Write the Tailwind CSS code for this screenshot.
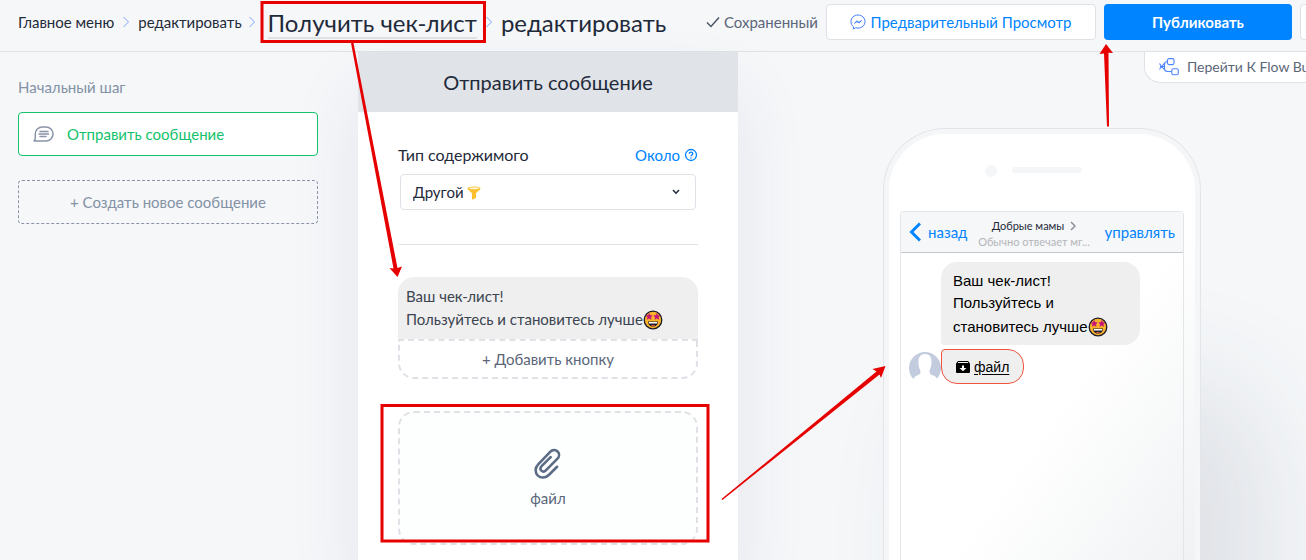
<!DOCTYPE html>
<html lang="ru">

<head>
    <meta charset="UTF-8">
    <meta name="viewport" content="width=device-width, initial-scale=1.0">
    <title>Отправить сообщение</title>
    <script src="https://cdn.jsdelivr.net/npm/@tailwindcss/browser@4"></script>
</head>

<body class="relative h-screen overflow-hidden flex flex-col bg-[#f5f7f9] font-['Lato',sans-serif] text-[15px] leading-[22px] text-[#1f2a3a]">

    <!-- shared icons -->
    <svg class="hidden">
        <symbol id="crumb" viewBox="0 0 8 12">
            <path d="M1.5 1l5 5-5 5" fill="none" stroke="#7fa6ff" stroke-width="1" />
        </symbol>
        <symbol id="star-eyes" viewBox="0 0 20 20">
            <circle cx="10" cy="10" r="8.800" fill="#fbb32b" stroke="#1c1c28" stroke-width="1.300" />
            <path d="M6.200 3.600l.9 1.900 2.100.2-1.500 1.500.4 2.100-1.900-1-1.900 1 .4-2.100-1.500-1.500 2.100-.2z" fill="#c4127c" stroke="#c4127c" stroke-width=".6" />
            <path d="M13.800 3.600l.9 1.900 2.100.2-1.500 1.500.4 2.100-1.900-1-1.900 1 .4-2.100-1.500-1.500 2.100-.2z" fill="#c4127c" stroke="#c4127c" stroke-width=".6" />
            <path d="M5 11.500h10c0 3.300-2.200 5-5 5s-5-1.700-5-5z" fill="#1c1c28" />
            <path d="M5.800 12h8.400v1.500H5.800z" fill="#fff" />
            <path d="M7.500 15.300c1.300-.8 3.700-.8 5 0-1.300.9-3.700.9-5 0z" fill="#e2574c" />
        </symbol>
    </svg>

    <header class="h-[52px] shrink-0 flex items-center pb-2 pl-[18px] border-b border-[#dfe1e5] whitespace-nowrap">
        <nav class="flex shrink-0 items-center">
            <a href="#">Главное меню</a>
            <svg class="w-2 h-3 mx-2"><use href="#crumb" /></svg>
            <a href="#">редактировать</a>
            <svg class="w-2 h-3 ml-1.5 mr-3"><use href="#crumb" /></svg>
            <h1 class="text-2xl leading-7 pt-1 border-b-2 border-[#dfe1e5]">Получить чек-лист</h1>
            <svg class="w-2 h-3 mx-2"><use href="#crumb" /></svg>
            <span class="text-2xl leading-7 pt-0.5">редактировать</span>
        </nav>
        <div class="flex shrink-0 items-center ml-auto -mr-[34px] gap-2">
            <span class="flex items-center gap-1 text-[#5b6679]">
                <svg class="w-[14px] h-3" viewBox="0 0 14 12"><path d="M1 6.500l4 4L13 1.500" fill="none" stroke="#4b5565" stroke-width="1.500" /></svg>
                Сохраненный
            </span>
            <button class="flex items-center justify-center gap-1 w-[270px] h-9 rounded border border-[#dfe1e7] bg-white text-[#0084ff]">
                <svg class="w-4 h-4" viewBox="0 0 16 16" fill="none" stroke="#3f7dff" stroke-linejoin="round">
                    <path d="M8 1C4 1 1 3.900 1 7.600c0 2.100.9 3.900 2.400 5.100V15l2.200-1.200c.8.2 1.600.3 2.400.3 4 0 7-2.900 7-6.500S12 1 8 1z" />
                    <path d="M4.500 9.200L7 6.800l2 1.600 2.500-1.900L9.200 9 7 7.600z" />
                </svg>
                Предварительный Просмотр
            </button>
            <button class="w-[188px] h-9 rounded bg-[#0084ff] text-white font-bold">Публиковать</button>
            <button class="w-10 h-9 rounded border border-[#dfe1e7] bg-white" aria-label="Ещё"></button>
        </div>
    </header>

    <div class="flex flex-1 min-h-0">
        <aside class="relative z-10 w-[358px] shrink-0 pt-6 pl-[18px] pr-10">
            <h2 class="text-[#8492a6]">Начальный шаг</h2>
            <button class="mt-3.5 w-full h-11 flex items-center gap-3 px-3.5 rounded border border-[#13c26b] bg-white text-[#13c26b]">
                <svg class="w-[22px] h-4" viewBox="0 0 22 16" fill="none" stroke="#8a93a8" stroke-width="1.500" stroke-linejoin="round">
                    <path d="M1 15c1-1 1.300-2 1.300-3.500V8a7 7 0 0 1 7-7H13a7 7 0 0 1 0 14z" />
                    <path d="M7 5.500h8M6 8h9.500M7 10.500h6" stroke-linecap="round" />
                </svg>
                Отправить сообщение
            </button>
            <button class="mt-6 w-full h-11 rounded border border-dashed border-[#8a93a8] text-[#8492a6]">+ Создать новое сообщение</button>
        </aside>

        <main class="w-[380px] shrink-0 bg-white shadow-[0_40px_70px_rgba(60,60,110,0.09)]">
            <h2 class="h-[60px] flex items-center justify-center bg-[#e0e3e8] text-xl">Отправить сообщение</h2>
            <div class="px-10 pt-8">
                <div class="flex justify-between">
                    <label for="content-type" class="text-base leading-[22px]">Тип содержимого</label>
                    <a href="#" class="flex items-center gap-1 text-[#0084ff]">
                        Около
                        <svg class="w-3.5 h-3.5" viewBox="0 0 14 14" fill="none" stroke="#0084ff" stroke-width="1.300">
                            <circle cx="7" cy="7" r="5.500" />
                            <path d="M5.300 5.800c0-2.200 3.500-2.200 3.500 0 0 1.200-1.800 1.200-1.800 2.400M7 9.200v1.200" />
                        </svg>
                    </a>
                </div>
                <div class="relative mt-2 mx-0.5">
                    <select id="content-type" class="w-full h-9 pl-3 pr-8 appearance-none rounded border border-[#dfe1e7] bg-white">
                        <option>Другой</option>
                    </select>
                    <svg class="absolute left-[67px] top-3 w-3.5 h-3.5 pointer-events-none" viewBox="0 0 14 14">
                        <path d="M.5 2.500C.5 1.200 3.500.500 7 .5s6.500.7 6.500 2c0 1.500-4 3.500-4.500 5V12l-4 1.800V7.500C4.500 6 .5 4 .5 2.500z" fill="#fdc02f" />
                        <ellipse cx="7" cy="2.300" rx="5" ry="1" fill="#fff3cf" />
                    </svg>
                    <svg class="absolute right-4 top-[15px] w-2 h-1.5 pointer-events-none" viewBox="0 0 8 6"><path d="M1 1l3 3.200L7 1" fill="none" stroke="#1f2a3a" stroke-width="1.500" /></svg>
                </div>
                <hr class="mt-[34px] border-[#dfe1e7]">

                <div class="mt-8 px-2 py-2 rounded-t-2xl bg-[#efefef] leading-[23px] text-[#3c4450]">
                    <p>Ваш чек-лист!</p>
                    <p class="flex items-center">Пользуйтесь и становитесь лучше<svg class="w-5 h-5"><use href="#star-eyes" /></svg></p>
                </div>
                <button class="w-full h-10 rounded-b-2xl border-2 border-dashed border-[#dfe1e7] text-[#5b6679]">+ Добавить кнопку</button>

                <button class="mt-8 w-full h-[134px] flex flex-col items-center justify-center gap-2 rounded-2xl border-2 border-dashed border-[#dfe1e7] bg-[#fdfffe] text-[#5b6679]">
                    <svg class="w-8 h-8" viewBox="2 1 30 30" fill="none" stroke="#5b6b86" stroke-width="2.400" stroke-linecap="round">
                        <path d="M25.500 19.500l-7.500 7.500c-3 3-7.500 3.500-10.500.8-3-3-2.700-7.500.3-10.500L19 5.500c2-2 5-2.300 7-.3s1.700 5-.3 7L15 23c-1.300 1.300-3 1.300-4.200.2-1.200-1.200-1-2.900.2-4.200l8.500-8.500" />
                    </svg>
                    файл
                </button>
            </div>
        </main>

        <section class="relative -z-10 flex-1 flex flex-col items-center pl-10">
            <a href="#" class="self-end -mr-10 w-[202px] h-[31px] shrink-0 flex items-center gap-2 pl-3.5 rounded-bl-2xl border-l border-b border-[#dfe1e7] bg-white whitespace-nowrap text-sm text-[#5b6679]">
                <svg class="w-5 h-[18px]" viewBox="0 0 20 18" fill="none" stroke="#4d86ff" stroke-width="1.100">
                    <path d="M.5 5.500l2 3-2 3M5 5.500l-2 3 2 3M1 8.500h4M8.500 3.500c-2 0-3 1-3 3v4c0 2 1 3 3 3h4" />
                    <rect x="8.500" y=".600" width="6.500" height="6" rx="1.500" />
                    <rect x="12.800" y="10.800" width="6.500" height="6" rx="1.500" />
                </svg>
                Перейти К Flow Builder
            </a>

            <div class="mt-[45px] w-[318px] flex-1 flex rounded-t-[62px] border border-b-0 border-[#e3e5e9] bg-[#f5f6f8] p-[5px] pb-0 shadow-[60px_260px_120px_rgba(60,65,90,0.12)]">
                <div class="flex-1 flex flex-col rounded-t-[56px] px-[11px] bg-linear-to-br from-white from-60% to-[#f0f2f3]">
                    <div class="h-[77px] flex items-start gap-[15px] pt-[31px] pl-[85px]">
                        <span class="w-3 h-3 rounded-full bg-[#f5f6f8]"></span>
                        <span class="w-[70px] h-1.5 mt-0.5 rounded-full bg-[#f5f6f8]"></span>
                    </div>
                    <div class="flex-1 border border-b-0 border-[#e3e5e9] rounded-t-sm">
                        <div class="h-[41px] flex items-center justify-between px-2 bg-[#f6f7f8] border-b border-[#c4c6ca] text-[#0084ff]">
                            <a href="#" class="flex items-center gap-[7px]">
                                <svg class="w-3 h-5" viewBox="0 0 12 20"><path d="M11 1.500L2.500 10l8.500 8.500" fill="none" stroke="#0084ff" stroke-width="3" /></svg>
                                назад
                            </a>
                            <div class="pt-1 pr-1 text-center text-[11px] leading-4">
                                <p class="flex items-center justify-center gap-1.5 text-[#1f2a3a]">Добрые мамы<svg class="w-1.5 h-2.5" viewBox="0 0 6 10"><path d="M1 1l4 4-4 4" fill="none" stroke="#8a8f98" stroke-width="1.500" /></svg></p>
                                <p class="text-[#b4b6ba]">Обычно отвечает мг...</p>
                            </div>
                            <a href="#">управлять</a>
                        </div>

                        <div class="pl-2 pt-[9px] font-['Liberation_Sans',sans-serif] text-black">
                            <div class="ml-8 w-[199px] pl-3 pt-2 pb-[5px] rounded-2xl rounded-bl-sm bg-[#efefef]">
                                <p>Ваш чек-лист!</p>
                                <p>Пользуйтесь и</p>
                                <p class="flex items-center leading-[26px]">становитесь лучше<svg class="w-5 h-5"><use href="#star-eyes" /></svg></p>
                            </div>
                            <div class="mt-1 flex items-end">
                                <svg class="w-8 h-8" viewBox="0 0 32 32">
                                    <circle cx="16" cy="16" r="16" fill="#c3cbdf" />
                                    <path d="M16 2c5 0 7 4 6.500 9-.2 4-1.500 6-2 8 .3 3 1 3.500 4 4.500 2 .8 2.500 1.500 3 2.500l3 6H1l4-6c1-1.500 1.500-2 3-2.500 3-1 3.500-2 3.500-4.500-1-2-1.800-4-2-8C9 6 11 2 16 2z" fill="#fff" />
                                </svg>
                                <a href="#" class="flex items-center gap-1 h-[35px] px-3.5 rounded-2xl rounded-tl-sm border border-[#f0533f] bg-[#efefef] text-sm underline underline-offset-2">
                                    <svg class="w-3.5 h-3" viewBox="0 0 14 12">
                                        <path d="M2 0h10l2 2.500V11a1 1 0 0 1-1 1H1a1 1 0 0 1-1-1V2.500z" fill="#000" />
                                        <path d="M2 1.500h10" stroke="#efefef" />
                                        <path d="M6 4.500h2V7h2.500L7 10.300 3.500 7H6z" fill="#fff" />
                                    </svg>
                                    файл
                                </a>
                            </div>
                        </div>
                    </div>
                </div>
            </div>
        </section>
    </div>

    <!-- annotations drawn over the page -->
    <svg class="absolute left-0 top-0 z-20 w-[1306px] h-[560px] pointer-events-none" viewBox="0 0 1306 560">
        <g fill="none" stroke="#e60000" stroke-width="3">
            <rect x="262" y="2.500" width="222.500" height="39" />
            <rect x="382" y="405.500" width="326" height="135.500" />
        </g>
        <g fill="#e60000">
            <path d="M351 43h2.500l44 225 4.500-1.500L397.500 277 389.500 268l4 .5z" />
            <path d="M1107 126.500l-3-73-4.500.5L1106 44l7 9-4.500-.3L1109 126.500z" />
            <path d="M721.500 499l155-127.500-4-2.500 13-3-4.500 12-1.500-3.500L722.500 500z" />
        </g>
    </svg>
</body>

</html>
